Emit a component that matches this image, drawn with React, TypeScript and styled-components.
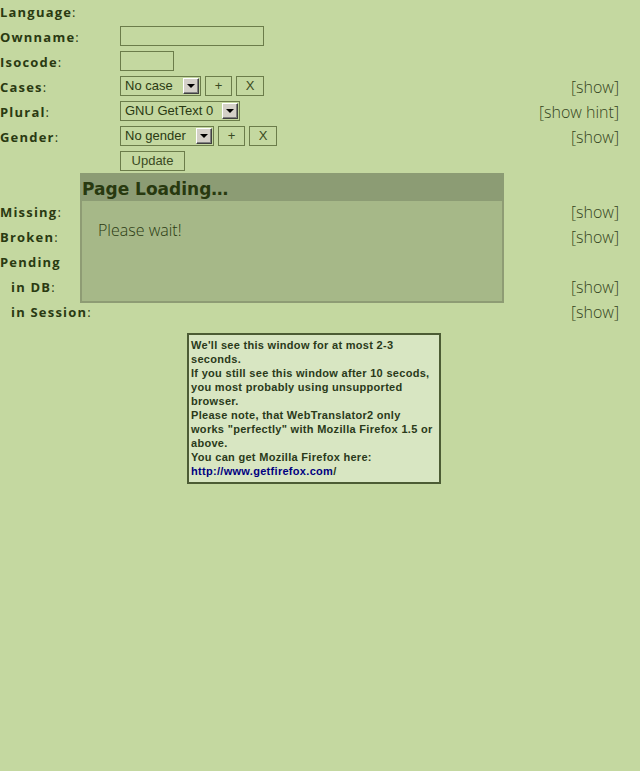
import React, { FC } from 'react';
import styled, { createGlobalStyle } from 'styled-components';

const GlobalStyle = createGlobalStyle`
  html, body {
    margin: 0;
    padding: 0;
    background: #c4d8a0;
  }
  body {
    font-family: "Open Sans", "DejaVu Sans", sans-serif;
    color: #2a3a12;
    min-height: 771px;
  }
`;

const Page = styled.div`
  position: relative;
  width: 640px;
  padding-top: 1px;
`;

const Form = styled.div`
  display: grid;
  grid-template-columns: 120px 1fr auto;
  grid-auto-rows: 25px;
  align-items: center;
  margin-top: -2px;
`;

const Label = styled.div<{ $indent?: boolean }>`
  font-size: 13px;
  font-weight: 700;
  letter-spacing: 1.2px;
  padding-left: ${({ $indent }) => ($indent ? '11px' : '0')};
  white-space: nowrap;
  color: #2a3a12;

  span {
    font-weight: 400;
  }
`;

const Controls = styled.div`
  display: flex;
  align-items: center;
  gap: 4px;
  margin-top: -2px;
`;

const Hint = styled.div`
  font-size: 16px;
  font-weight: 300;
  color: #34441c;
  text-align: right;
  padding-right: 21px;
  white-space: nowrap;
`;

const TextInput = styled.div<{ $w: number }>`
  width: ${({ $w }) => $w}px;
  height: 20px;
  box-sizing: border-box;
  border: 1px solid #6b7c4a;
`;

const Select = styled.div<{ $w: number }>`
  width: ${({ $w }) => $w}px;
  height: 20px;
  box-sizing: border-box;
  border: 1px solid #6b7c4a;
  display: flex;
  align-items: center;
  justify-content: space-between;
  padding: 0 1px 0 4px;
  font-family: "Liberation Sans", Arial, sans-serif;
  font-size: 13px;
  color: #2a3a12;
`;

const Arrow = styled.div`
  width: 16px;
  height: 16px;
  box-sizing: border-box;
  background: #d4d0c8;
  border: 1px solid;
  border-color: #ffffff #404040 #404040 #ffffff;
  box-shadow: inset -1px -1px 0 #808080;
  display: flex;
  align-items: center;
  justify-content: center;

  &::after {
    content: '';
    border-left: 4px solid transparent;
    border-right: 4px solid transparent;
    border-top: 4px solid #000;
  }
`;

const SmallButton = styled.div<{ $w: number }>`
  width: ${({ $w }) => $w}px;
  height: 20px;
  box-sizing: border-box;
  border: 1px solid #6b7c4a;
  display: flex;
  align-items: center;
  justify-content: center;
  font-family: "Liberation Sans", Arial, sans-serif;
  font-size: 13px;
  font-weight: 300;
  color: #3a4a22;
`;

const Overlay = styled.div`
  position: absolute;
  left: 80px;
  top: 173px;
  width: 424px;
  height: 130px;
  display: flex;
  flex-direction: column;
`;

const OverlayHeader = styled.div`
  height: 28px;
  background: #8c9c74;
  font-family: "DejaVu Sans", sans-serif;
  font-size: 17px;
  font-weight: 700;
  color: #28390f;
  padding-left: 2px;
  line-height: 33px;
  overflow: hidden;
`;

const OverlayBody = styled.div`
  flex: 1;
  background: #a6b888;
  border: 2px solid #8e9c74;
  border-top: none;
  padding: 18px 0 0 16px;
  font-size: 16px;
  font-weight: 300;
  color: #2a3a12;
`;

const InfoBox = styled.div`
  margin: 9px 0 0 187px;
  width: 254px;
  box-sizing: border-box;
  border: 2px solid #4c5c34;
  background: #d8e6c2;
  padding: 3px 2px 4px 2px;
  font-family: "Liberation Sans", Arial, sans-serif;
  font-size: 11px;
  font-weight: 700;
  letter-spacing: 0.3px;
  line-height: 14px;
  color: #2a3a1a;

  a {
    color: #000080;
    text-decoration: none;
  }
`;

const ShowLink: FC<{ text?: string }> = ({ text = '[show]' }) => <Hint>{text}</Hint>;

const L: FC<{ name: string; indent?: boolean; colon?: boolean }> = ({ name, indent, colon = true }) => (
  <Label $indent={indent}>
    {name}
    {colon && <span>:</span>}
  </Label>
);

const App: FC = () => (
  <Page>
    <GlobalStyle />
    <Form>
      <L name="Language" />
      <div />
      <div />

      <L name="Ownname" />
      <Controls>
        <TextInput $w={144} />
      </Controls>
      <div />

      <L name="Isocode" />
      <Controls>
        <TextInput $w={54} />
      </Controls>
      <div />

      <L name="Cases" />
      <Controls>
        <Select $w={81}>
          No case
          <Arrow />
        </Select>
        <SmallButton $w={27}>+</SmallButton>
        <SmallButton $w={28}>X</SmallButton>
      </Controls>
      <ShowLink />

      <L name="Plural" />
      <Controls>
        <Select $w={120}>
          GNU GetText 0
          <Arrow />
        </Select>
      </Controls>
      <ShowLink text="[show hint]" />

      <L name="Gender" />
      <Controls>
        <Select $w={94}>
          No gender
          <Arrow />
        </Select>
        <SmallButton $w={27}>+</SmallButton>
        <SmallButton $w={28}>X</SmallButton>
      </Controls>
      <ShowLink />

      <div />
      <Controls>
        <SmallButton $w={65}>Update</SmallButton>
      </Controls>
      <div />

      <div />
      <div />
      <div />

      <L name="Missing" />
      <div />
      <ShowLink />

      <L name="Broken" />
      <div />
      <ShowLink />

      <L name="Pending" colon={false} />
      <div />
      <div />

      <L name="in DB" indent />
      <div />
      <ShowLink />

      <L name="in Session" indent />
      <div />
      <ShowLink />
    </Form>

    <InfoBox>
      We'll see this window for at most 2-3 seconds.
      <br />
      If you still see this window after 10 secods, you most probably using unsupported browser.
      <br />
      Please note, that WebTranslator2 only works "perfectly" with Mozilla Firefox 1.5 or above.
      <br />
      You can get Mozilla Firefox here:
      <br />
      <a href="#">http://www.getfirefox.com</a>/
    </InfoBox>

    <Overlay>
      <OverlayHeader>Page Loading…</OverlayHeader>
      <OverlayBody>Please wait!</OverlayBody>
    </Overlay>
  </Page>
);

export default App;
